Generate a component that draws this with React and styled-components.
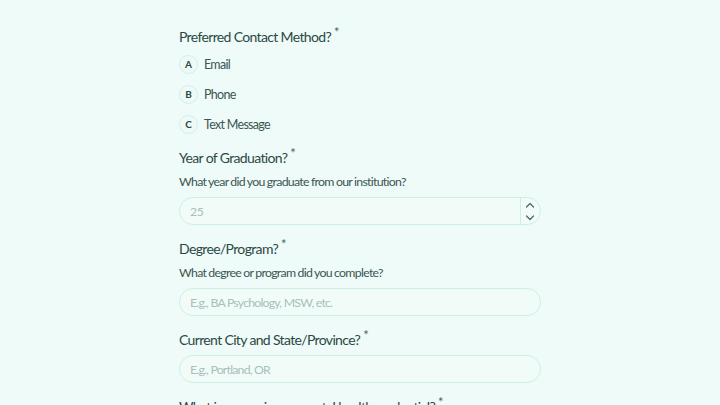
import React from 'react';
import styled, { createGlobalStyle } from 'styled-components';

const GlobalStyle = createGlobalStyle`
  html, body {
    margin: 0;
    padding: 0;
    background: #effbf8;
    font-family: 'Lato', 'Liberation Sans', sans-serif;
    overflow: hidden;
  }
`;

const options = [
  { key: 'A', label: 'Email' },
  { key: 'B', label: 'Phone' },
  { key: 'C', label: 'Text Message' },
];

const App = () => {
  return (
    <>
      <GlobalStyle />
      <Page>
        <Form>
          <Field>
            <Title>Preferred Contact Method?<Star>*</Star></Title>
            <Options>
              {options.map((o) => (
                <Option key={o.key}>
                  <Badge>{o.key}</Badge>
                  <OptionLabel>{o.label}</OptionLabel>
                </Option>
              ))}
            </Options>
          </Field>

          <Field>
            <Title>Year of Graduation?<Star>*</Star></Title>
            <Hint>What year did you graduate from our institution?</Hint>
            <NumberWrap>
              <NumberInput placeholder="25" />
              <Spinner>
                <svg width="10" height="6" viewBox="0 0 10 6">
                  <path d="M1.5 5 L5 1.5 L8.5 5" fill="none" stroke="#4f6a67" strokeWidth="1.3" strokeLinecap="round" strokeLinejoin="round" />
                </svg>
                <svg width="10" height="6" viewBox="0 0 10 6">
                  <path d="M1.5 1 L5 4.5 L8.5 1" fill="none" stroke="#4f6a67" strokeWidth="1.3" strokeLinecap="round" strokeLinejoin="round" />
                </svg>
              </Spinner>
            </NumberWrap>
          </Field>

          <Field>
            <Title>Degree/Program?<Star>*</Star></Title>
            <Hint>What degree or program did you complete?</Hint>
            <TextInput placeholder="E.g., BA Psychology, MSW, etc." />
          </Field>

          <Field>
            <Title>Current City and State/Province?<Star>*</Star></Title>
            <TextInput placeholder="E.g., Portland, OR" />
          </Field>

          <Field>
            <Title>What is your primary mental health credential?<Star>*</Star></Title>
          </Field>
        </Form>
      </Page>
    </>
  );
};

export default App;

const Page = styled.div`
  display: flex;
  justify-content: center;
  padding-top: 27px;
  height: 405px;
  box-sizing: border-box;
  overflow: hidden;
`;

const Form = styled.div`
  width: 362px;
  display: flex;
  flex-direction: column;
  gap: 14px;
`;

const Field = styled.div`
  display: flex;
  flex-direction: column;
`;

const Title = styled.div`
  font-size: 14px;
  letter-spacing: -0.65px;
  color: #2c4845;
  line-height: 20px;
  margin-bottom: 5px;
  white-space: nowrap;
`;

const Star = styled.span`
  font-size: 13px;
  line-height: 0;
  vertical-align: 5px;
  margin-left: 3px;
  color: #4a6461;
`;

const Options = styled.div`
  display: flex;
  flex-direction: column;
  gap: 10px;
  margin-top: 2px;
`;

const Option = styled.div`
  display: flex;
  align-items: center;
  gap: 6px;
  height: 20px;
`;

const Badge = styled.div`
  width: 19px;
  height: 19px;
  box-sizing: border-box;
  border-radius: 50%;
  border: 1.5px solid #d2f0e9;
  background: #eefaf7;
  display: flex;
  align-items: center;
  justify-content: center;
  font-size: 10px;
  font-weight: 700;
  color: #2c4845;
`;

const OptionLabel = styled.span`
  font-size: 12.5px;
  letter-spacing: -0.7px;
  color: #3b5653;
`;

const Hint = styled.div`
  font-size: 12.3px;
  letter-spacing: -0.7px;
  word-spacing: -0.3px;
  color: #3b5653;
  line-height: 18px;
  margin-bottom: 6px;
  white-space: nowrap;
`;

const NumberWrap = styled.div`
  display: flex;
  align-items: stretch;
  height: 28px;
  border: 1px solid #cdeee6;
  border-radius: 14px;
  background: #f1fcf9;
  box-sizing: border-box;
  overflow: hidden;
`;

const NumberInput = styled.input`
  flex: 1;
  border: none;
  background: transparent;
  outline: none;
  padding: 0 10px;
  font-family: inherit;
  font-size: 12.3px;
  letter-spacing: -0.5px;
  color: #2c4845;

  &::placeholder {
    color: #a9bfbb;
  }
`;

const Spinner = styled.div`
  width: 18px;
  border-left: 1px solid #cdeee6;
  display: flex;
  flex-direction: column;
  align-items: center;
  justify-content: center;
  gap: 7px;
  padding-right: 1px;
`;

const TextInput = styled.input`
  height: 28px;
  box-sizing: border-box;
  border: 1px solid #cdeee6;
  border-radius: 14px;
  background: #f1fcf9;
  outline: none;
  padding: 0 10px;
  font-family: inherit;
  font-size: 12.3px;
  letter-spacing: -0.8px;
  color: #2c4845;

  &::placeholder {
    color: #a9bfbb;
  }
`;
